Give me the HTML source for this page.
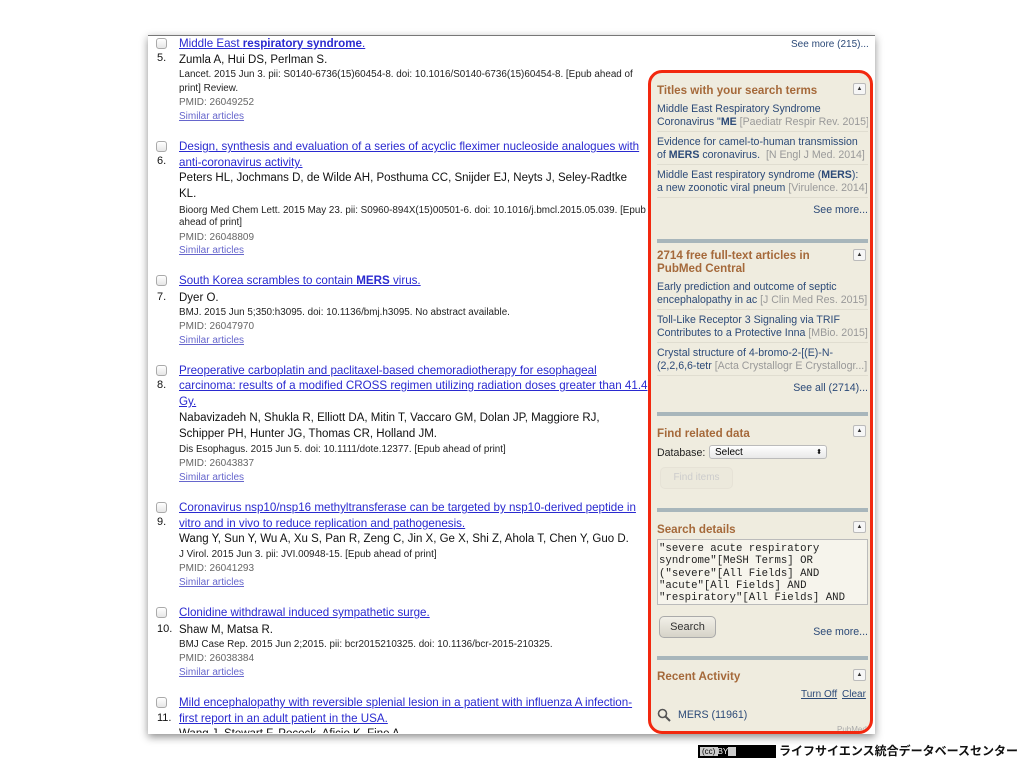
<!DOCTYPE html>
<html><head><meta charset="utf-8"><style>
body{margin:0;width:1024px;height:768px;background:#fff;position:relative;overflow:hidden;font-family:"Liberation Sans",Arial,sans-serif}
.frame{position:absolute;left:148px;top:35px;width:727px;height:698px;background:#fff;border-top:1px solid #777;box-shadow:0 3px 8px rgba(0,0,0,.45);overflow:hidden}
.a{position:absolute;white-space:nowrap;line-height:15px}
.t{font-size:11.6px;color:#2a2ad0;text-decoration:underline}
.au{font-size:11.5px;color:#111}
.j{font-size:9.85px;color:#222}
.p{font-size:10px;color:#666}
.s{font-size:10px;color:#6666cc;text-decoration:underline}
.n{font-size:11px;color:#111}
.cb{position:absolute;width:9px;height:9px;border:1px solid #aaa;border-radius:3px;background:linear-gradient(#fff,#e6e6e6)}
.side{position:absolute;left:648px;top:70px;width:219px;height:658px;border:3px solid #f2280f;border-radius:14px;background:#efecdf;overflow:hidden}
.h{position:absolute;font-size:11.6px;font-weight:bold;color:#a5693a;white-space:nowrap;line-height:14px}
.l{position:absolute;font-size:10.6px;color:#2c4a78;white-space:nowrap;line-height:14px}
.tr{width:211px;overflow:hidden}
.g{color:#999}
.sep{position:absolute;left:6px;width:211px;height:4px;background:#a8b6bb}
.up{position:absolute;right:4px;width:11px;height:10px;border:1px solid #bbb;border-radius:2px;background:#f6f6f6;font-size:6px;text-align:center;line-height:10px;color:#333}
.rule{position:absolute;left:6px;width:211px;height:1px;background:#e0ddd0}
</style></head><body>
<div class="frame">
<div class="a t" style="left:31px;top:0px">Middle East <b>respiratory syndrome</b>.</div>
<div class="a" style="left:643px;top:1px;font-size:10px;color:#2c4a78">See more (215)...</div>
</div>
<div class="cb" style="left:156px;top:38px"></div><div class="a n" style="left:157px;top:51px">5.</div>
<div class="a au" style="left:179px;top:53px">Zumla A, Hui DS, Perlman S.</div>
<div class="a j" style="left:179px;top:67px">Lancet. 2015 Jun 3. pii: S0140-6736(15)60454-8. doi: 10.1016/S0140-6736(15)60454-8. [Epub ahead of</div>
<div class="a j" style="left:179px;top:81px">print] Review.</div>
<div class="a p" style="left:179px;top:95px">PMID: 26049252</div>
<div class="a s" style="left:179px;top:109px">Similar articles</div>

<div class="cb" style="left:156px;top:141px"></div><div class="a n" style="left:157px;top:154px">6.</div>
<div class="a t" style="left:179px;top:139px">Design, synthesis and evaluation of a series of acyclic fleximer nucleoside analogues with</div>
<div class="a t" style="left:179px;top:155px">anti-coronavirus activity.</div>
<div class="a au" style="left:179px;top:171px">Peters HL, Jochmans D, de Wilde AH, Posthuma CC, Snijder EJ, Neyts J, Seley-Radtke</div>
<div class="a au" style="left:179px;top:187px">KL.</div>
<div class="a j" style="left:179px;top:203px">Bioorg Med Chem Lett. 2015 May 23. pii: S0960-894X(15)00501-6. doi: 10.1016/j.bmcl.2015.05.039. [Epub</div>
<div class="a j" style="left:179px;top:215px">ahead of print]</div>
<div class="a p" style="left:179px;top:230px">PMID: 26048809</div>
<div class="a s" style="left:179px;top:243px">Similar articles</div>

<div class="cb" style="left:156px;top:275px"></div><div class="a n" style="left:157px;top:290px">7.</div>
<div class="a t" style="left:179px;top:273px">South Korea scrambles to contain <b>MERS</b> virus.</div>
<div class="a au" style="left:179px;top:291px">Dyer O.</div>
<div class="a j" style="left:179px;top:305px">BMJ. 2015 Jun 5;350:h3095. doi: 10.1136/bmj.h3095. No abstract available.</div>
<div class="a p" style="left:179px;top:319px">PMID: 26047970</div>
<div class="a s" style="left:179px;top:333px">Similar articles</div>

<div class="cb" style="left:156px;top:365px"></div><div class="a n" style="left:157px;top:378px">8.</div>
<div class="a t" style="left:179px;top:363px">Preoperative carboplatin and paclitaxel-based chemoradiotherapy for esophageal</div>
<div class="a t" style="left:179px;top:378px">carcinoma: results of a modified CROSS regimen utilizing radiation doses greater than 41.4</div>
<div class="a t" style="left:179px;top:394px">Gy.</div>
<div class="a au" style="left:179px;top:411px">Nabavizadeh N, Shukla R, Elliott DA, Mitin T, Vaccaro GM, Dolan JP, Maggiore RJ,</div>
<div class="a au" style="left:179px;top:427px">Schipper PH, Hunter JG, Thomas CR, Holland JM.</div>
<div class="a j" style="left:179px;top:442px">Dis Esophagus. 2015 Jun 5. doi: 10.1111/dote.12377. [Epub ahead of print]</div>
<div class="a p" style="left:179px;top:456px">PMID: 26043837</div>
<div class="a s" style="left:179px;top:470px">Similar articles</div>

<div class="cb" style="left:156px;top:502px"></div><div class="a n" style="left:157px;top:515px">9.</div>
<div class="a t" style="left:179px;top:500px">Coronavirus nsp10/nsp16 methyltransferase can be targeted by nsp10-derived peptide in</div>
<div class="a t" style="left:179px;top:516px">vitro and in vivo to reduce replication and pathogenesis.</div>
<div class="a au" style="left:179px;top:532px">Wang Y, Sun Y, Wu A, Xu S, Pan R, Zeng C, Jin X, Ge X, Shi Z, Ahola T, Chen Y, Guo D.</div>
<div class="a j" style="left:179px;top:547px">J Virol. 2015 Jun 3. pii: JVI.00948-15. [Epub ahead of print]</div>
<div class="a p" style="left:179px;top:561px">PMID: 26041293</div>
<div class="a s" style="left:179px;top:575px">Similar articles</div>

<div class="cb" style="left:156px;top:607px"></div><div class="a n" style="left:157px;top:622px">10.</div>
<div class="a t" style="left:179px;top:605px">Clonidine withdrawal induced sympathetic surge.</div>
<div class="a au" style="left:179px;top:623px">Shaw M, Matsa R.</div>
<div class="a j" style="left:179px;top:637px">BMJ Case Rep. 2015 Jun 2;2015. pii: bcr2015210325. doi: 10.1136/bcr-2015-210325.</div>
<div class="a p" style="left:179px;top:651px">PMID: 26038384</div>
<div class="a s" style="left:179px;top:665px">Similar articles</div>

<div class="cb" style="left:156px;top:697px"></div><div class="a n" style="left:157px;top:711px">11.</div>
<div class="a t" style="left:179px;top:695px">Mild encephalopathy with reversible splenial lesion in a patient with influenza A infection-</div>
<div class="a t" style="left:179px;top:711px">first report in an adult patient in the USA.</div>
<div style="position:absolute;left:179px;top:727px;width:260px;height:6px;overflow:hidden"><div class="a au" style="left:0;top:0">Wang J, Stewart F, Pocock, Aficio K, Fine A</div></div>

<div class="side">
<div class="h" style="left:6px;top:11px">Titles with your search terms</div>
<div class="up" style="top:10px">▲</div>
<div class="l tr" style="left:6px;top:29px">Middle East Respiratory Syndrome</div>
<div class="l tr" style="left:6px;top:42px">Coronavirus "<b>ME</b> <span class="g">[Paediatr Respir Rev. 2015]</span></div>
<div class="rule" style="top:58px"></div>
<div class="l tr" style="left:6px;top:62px">Evidence for camel-to-human transmission</div>
<div class="l tr" style="left:6px;top:75px">of <b>MERS</b> coronavirus. &nbsp;<span class="g">[N Engl J Med. 2014]</span></div>
<div class="rule" style="top:91px"></div>
<div class="l tr" style="left:6px;top:95px">Middle East respiratory syndrome (<b>MERS</b>):</div>
<div class="l tr" style="left:6px;top:108px">a new zoonotic viral pneum <span class="g">[Virulence. 2014]</span></div>
<div class="rule" style="top:124px"></div>
<div class="l" style="right:2px;top:130px">See more...</div>
<div class="sep" style="top:166px;height:4px"></div>
<div class="h" style="left:6px;top:176px">2714 free full-text articles in</div>
<div class="h" style="left:6px;top:189px">PubMed Central</div>
<div class="up" style="top:176px">▲</div>
<div class="l tr" style="left:6px;top:207px">Early prediction and outcome of septic</div>
<div class="l tr" style="left:6px;top:220px">encephalopathy in ac <span class="g">[J Clin Med Res. 2015]</span></div>
<div class="rule" style="top:236px"></div>
<div class="l tr" style="left:6px;top:240px">Toll-Like Receptor 3 Signaling via TRIF</div>
<div class="l tr" style="left:6px;top:253px">Contributes to a Protective Inna <span class="g">[MBio. 2015]</span></div>
<div class="rule" style="top:269px"></div>
<div class="l tr" style="left:6px;top:273px">Crystal structure of 4-bromo-2-[(E)-N-</div>
<div class="l tr" style="left:6px;top:286px">(2,2,6,6-tetr <span class="g">[Acta Crystallogr E Crystallogr...]</span></div>
<div class="rule" style="top:302px"></div>
<div class="l" style="right:2px;top:308px">See all (2714)...</div>
<div class="sep" style="top:339px"></div>
<div class="h" style="left:6px;top:354px">Find related data</div>
<div class="up" style="top:352px">▲</div>
<div class="l" style="left:6px;top:373px;color:#222">Database:</div>
<div style="position:absolute;left:58px;top:372px;width:118px;height:14px;border:1px solid #bbb;border-radius:3px;background:linear-gradient(#fff,#e8e8e8);font-size:10px;line-height:13px;padding-left:5px;box-sizing:border-box">Select<span style="position:absolute;right:4px;font-size:7px">⬍</span></div>
<div style="position:absolute;left:9px;top:394px;width:71px;height:20px;border:1px solid #e6e2d6;border-radius:5px;background:#ece9dc;color:#ccc;font-size:10px;text-align:center;line-height:20px">Find items</div>
<div class="sep" style="top:435px"></div>
<div class="h" style="left:6px;top:450px">Search details</div>
<div class="up" style="top:448px">▲</div>
<div style="position:absolute;left:6px;top:466px;width:211px;height:66px;border:1px solid #bbb;background:#f6f4ec;box-sizing:border-box;font-family:'Liberation Mono',monospace;font-size:10.7px;line-height:12.3px;padding:3px 1px;white-space:pre;color:#222;overflow:hidden">"severe acute respiratory
syndrome"[MeSH Terms] OR
("severe"[All Fields] AND
"acute"[All Fields] AND
"respiratory"[All Fields] AND</div>
<div style="position:absolute;left:8px;top:543px;width:55px;height:20px;border:1px solid #aaa;border-radius:5px;background:linear-gradient(#f2f0e8,#d6d3c8);font-size:11px;text-align:center;line-height:20px;color:#333">Search</div>
<div class="l" style="right:2px;top:552px">See more...</div>
<div class="sep" style="top:583px"></div>
<div class="h" style="left:6px;top:597px">Recent Activity</div>
<div class="up" style="top:596px">▲</div>
<div class="l" style="left:150px;top:615px;font-size:10px;text-decoration:underline">Turn Off</div>
<div class="l" style="left:191px;top:615px;font-size:10px;text-decoration:underline">Clear</div>
<svg style="position:absolute;left:6px;top:635px" width="14" height="14" viewBox="0 0 14 14"><circle cx="5.5" cy="5.5" r="4" fill="none" stroke="#555" stroke-width="1.6"/><line x1="8.5" y1="8.5" x2="13" y2="13" stroke="#555" stroke-width="2"/></svg>
<div class="l" style="left:27px;top:635px">MERS (11961)</div>
<div class="l" style="left:186px;top:650px;font-size:8px;color:#aaa">PubMed</div>
</div>

<div style="position:absolute;left:698px;top:745px;width:78px;height:13px;border:1px solid #000;background:#000;box-sizing:border-box"><div style="position:absolute;left:1px;top:1px;width:36px;height:9px;background:#ccc;font-size:8px;line-height:9px;color:#000;padding-left:2px;box-sizing:border-box">(cc) <span style="background:#000;color:#fff">BY</span></div></div>
<div class="a" style="left:779px;top:744px;font-size:12px;font-weight:bold;font-family:'Liberation Sans','Noto Sans CJK JP',sans-serif;color:#111">ライフサイエンス統合データベースセンター</div>
</body></html>
